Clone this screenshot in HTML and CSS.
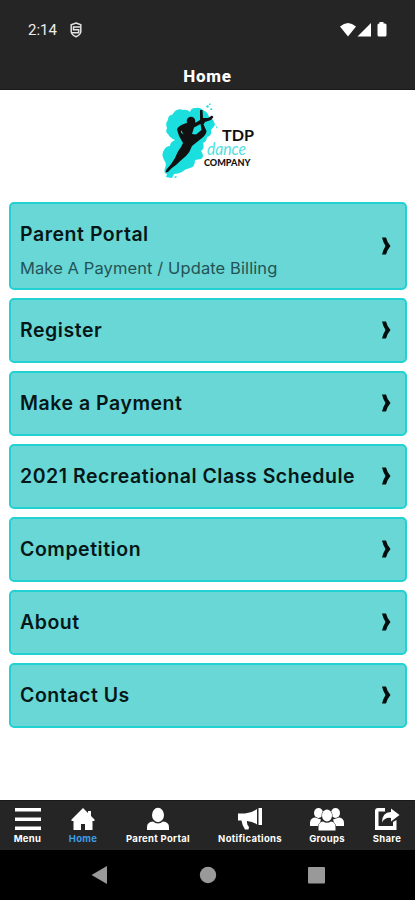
FILE: index.html
```html
<!DOCTYPE html>
<html lang="en">
<head>
    <meta charset="UTF-8">
    <meta name="viewport" content="width=device-width, initial-scale=1.0">
    <title>TDP Dance Company</title>
    <link rel="stylesheet" href="styles.css">
</head>
<body>
    <div class="app">
        <header class="header">
            <div class="status-bar">
                <span class="time">2:14</span>
                <svg class="shield" width="12" height="16" viewBox="0 0 12 16" fill="none" stroke="#e4e4e4" stroke-width="1.5">
                    <path d="M6 1 L10.8 2.8 V10 Q10.3 13 6 14.8 Q1.7 13 1.2 10 V2.8 Z"/>
                    <path d="M10 5 H3.5 V7.7 H8.7 V10.7 H2"/>
                </svg>
                <svg class="signals" width="50" height="18" viewBox="0 0 50 18" fill="#fff">
                    <path d="M0 5.500 Q8 -1.500 16 5.500 L8 15.500 Z"/>
                    <path d="M31 2 V15.500 H17.500 Z"/>
                    <path d="M39.500 2.500 V1 H43.500 V2.500 H45 Q46.500 2.500 46.500 4 V14 Q46.500 15.500 45 15.500 H39 Q37.500 15.500 37.500 14 V4 Q37.500 2.500 39 2.500 Z"/>
                </svg>
            </div>
            <h1 class="title">Home</h1>
        </header>

        <main class="content">
            <div class="logo">
                <svg width="100" height="84" viewBox="0 0 100 84">
                    <!-- paint splash -->
                    <path fill="#1bdede" d="M17 11 Q21 8 25 10 Q29 9 32 12 Q33 8 37 8 Q42 7 45 10 Q50 12 51 17 Q56 19 57 25 L53 30 Q54 36 49 37 Q49 41 45 43 Q47 48 43 51 Q47 56 43 59 L37 60 Q37 67 32 68 Q27 69 24 72 Q20 74 16 74 L14 78 L8 77 L9 74 Q5 73 7 68 Q9 63 6 60 Q3 54 6 50 Q8 46 12 46 Q12 42 17 40 Q12 38 10 34 Q7 32 9 28 Q7 23 10 20 Q10 15 14 15 Z"/>
                    <path fill="#1bdede" d="M48 6 l2 -1 l1 2 l-2 1 Z M52 9 l1.500 -1 l1 2 h-2 Z M51 3.500 h1.500 v1.500 h-1.500 Z M58 26 l1.500 1 l-1 1.500 Z M16 77 l2 -1 l1 1 l-2 1 Z"/>
                    <!-- dancer -->
                    <circle cx="33" cy="21" r="4.300" fill="#111"/>
                    <path fill="#111" d="M42 10 L44.500 10 L45 18 L50 18 L54 15.500 L55.500 17 L53 20 L47 22 L45.500 24.500 L48.500 31 Q48 35 44 38 L34 46 Q32 52 28 56 Q22 61 18 65 Q13 68 10 72 L7.500 72.500 L8.500 69.500 Q13 65 17 58 Q19 52 23 47 L25 43 L21 36 L19 29.500 Q20 26 27 23.500 L33 22 L38 22.500 L42 20 Z"/>
                    <path fill="#1bdede" d="M36 27.500 L42.500 24 L43.500 30 L38 34.500 L34 34 Z M23 30 L25.500 34.500 L23 32.500 Z"/>
                    <text class="logo-script" x="49" y="54.500" textLength="39" lengthAdjust="spacingAndGlyphs">dance</text>
                    <text class="logo-name" x="64" y="41" textLength="32" lengthAdjust="spacingAndGlyphs">TDP</text>
                    <text class="logo-company" x="46" y="66" textLength="46.500" lengthAdjust="spacingAndGlyphs">COMPANY</text>
                </svg>
            </div>

            <nav class="links">
                <a class="card card-tall" href="#">
                    <span class="card-text">
                        <span class="card-title">Parent Portal</span>
                        <span class="card-subtitle">Make A Payment / Update Billing</span>
                    </span>
                    <svg class="chevron" viewBox="0 0 10 18"><path d="M1 0.500 H5 Q6 5 9.500 9 Q6 13 5 17.500 H1 Q2 13 4.500 9 Q2 5 1 0.500 Z"/></svg>
                </a>
                <a class="card" href="#">
                    <span class="card-title">Register</span>
                    <svg class="chevron" viewBox="0 0 10 18"><path d="M1 0.500 H5 Q6 5 9.500 9 Q6 13 5 17.500 H1 Q2 13 4.500 9 Q2 5 1 0.500 Z"/></svg>
                </a>
                <a class="card" href="#">
                    <span class="card-title">Make a Payment</span>
                    <svg class="chevron" viewBox="0 0 10 18"><path d="M1 0.500 H5 Q6 5 9.500 9 Q6 13 5 17.500 H1 Q2 13 4.500 9 Q2 5 1 0.500 Z"/></svg>
                </a>
                <a class="card" href="#">
                    <span class="card-title">2021 Recreational Class Schedule</span>
                    <svg class="chevron" viewBox="0 0 10 18"><path d="M1 0.500 H5 Q6 5 9.500 9 Q6 13 5 17.500 H1 Q2 13 4.500 9 Q2 5 1 0.500 Z"/></svg>
                </a>
                <a class="card" href="#">
                    <span class="card-title">Competition</span>
                    <svg class="chevron" viewBox="0 0 10 18"><path d="M1 0.500 H5 Q6 5 9.500 9 Q6 13 5 17.500 H1 Q2 13 4.500 9 Q2 5 1 0.500 Z"/></svg>
                </a>
                <a class="card" href="#">
                    <span class="card-title">About</span>
                    <svg class="chevron" viewBox="0 0 10 18"><path d="M1 0.500 H5 Q6 5 9.500 9 Q6 13 5 17.500 H1 Q2 13 4.500 9 Q2 5 1 0.500 Z"/></svg>
                </a>
                <a class="card" href="#">
                    <span class="card-title">Contact Us</span>
                    <svg class="chevron" viewBox="0 0 10 18"><path d="M1 0.500 H5 Q6 5 9.500 9 Q6 13 5 17.500 H1 Q2 13 4.500 9 Q2 5 1 0.500 Z"/></svg>
                </a>
            </nav>
        </main>

        <nav class="tab-bar">
            <a class="tab" href="#">
                <svg width="26" height="24" viewBox="0 0 26 24"><path d="M0 1 H26 V4.500 H0 Z M0 10.500 H26 V14 H0 Z M0 19.500 H26 V23 H0 Z"/></svg>
                <span>Menu</span>
            </a>
            <a class="tab active" href="#">
                <svg width="24" height="24" viewBox="0 0 24 24"><path d="M12 1 L17 6 V4 H20 V9 L23.500 12.500 V14 H21.500 V23 H14 V17 H10 V23 H2.500 V14 H0.500 V12.500 Z"/></svg>
                <span>Home</span>
            </a>
            <a class="tab" href="#">
                <svg width="24" height="24" viewBox="0 0 24 24"><ellipse cx="12" cy="8" rx="6" ry="7.200"/><path d="M1 23 V20 Q1 15 7 14.500 Q12 18.500 17 14.500 Q23 15 23 20 V23 Z"/></svg>
                <span>Parent Portal</span>
            </a>
            <a class="tab" href="#">
                <svg width="26" height="24" viewBox="0 0 26 24"><path d="M1 6.500 H8 Q15 6 20 2 V17.500 Q16 14.500 10 14 Q9.500 17 12 20 L11.500 22.500 H8 Q5 18 4.500 13.500 H1 Z M21.500 1 H25 V18 H21.500 Z"/></svg>
                <span>Notifications</span>
            </a>
            <a class="tab" href="#">
                <svg width="36" height="24" viewBox="0 0 36 24">
                    <ellipse cx="9.500" cy="6" rx="4.500" ry="5"/><ellipse cx="26.500" cy="6" rx="4.500" ry="5"/>
                    <path d="M1 19 V16 Q1 11 6 10.500 L12 12.500 L10 19 Z M35 19 V16 Q35 11 30 10.500 L24 12.500 L26 19 Z"/>
                    <g class="group-front"><ellipse cx="18" cy="8.500" rx="5" ry="6"/><path d="M9.500 23.500 V20 Q9.500 15 14 14.500 Q18 17 22 14.500 Q26.500 15 26.500 20 V23.500 Z"/></g>
                </svg>
                <span>Groups</span>
            </a>
            <a class="tab" href="#">
                <svg width="26" height="24" viewBox="0 0 26 24"><path d="M11 1 V4.500 H4.500 V19 H19 V15 L22.500 13 V23 H1 V4 Q1 1 4 1 Z"/><path d="M17 1.500 L25.500 8 L17 14.500 V11 Q11 10 8 15.500 Q8 5 17 5 Z"/></svg>
                <span>Share</span>
            </a>
        </nav>

        <div class="system-nav">
            <svg width="17" height="20" viewBox="0 0 17 20"><path d="M0.500 10 L16 1 V19 Z"/></svg>
            <svg width="18" height="20" viewBox="0 0 18 20"><circle cx="9" cy="10" r="8.200"/></svg>
            <svg width="17" height="20" viewBox="0 0 17 20"><rect x="0" y="2" width="17" height="16.500" rx="1"/></svg>
        </div>
    </div>
</body>
</html>
```
FILE: styles.css
```css
* {
    box-sizing: border-box;
}

body {
    margin: 0;
    background: #fff;
    font-family: Inter, "Open Sans", sans-serif;
}

a {
    text-decoration: none;
}

.app {
    display: flex;
    flex-direction: column;
    height: 900px;
    width: 415px;
    overflow: hidden;
}

.header {
    height: 90px;
    background: #252525;
    border-bottom: 1px solid #1a1a1a;
    color: #fff;
}

.status-bar {
    display: flex;
    align-items: center;
    height: 60px;
    padding: 0 25px 0 28px;
}

.time {
    font: 400 15px/18px Roboto, sans-serif;
    color: #ededed;
    width: 42px;
}

.signals {
    margin-left: auto;
}

.title {
    margin: 5px 0 0;
    font: 800 17px/22px Roboto, sans-serif;
    letter-spacing: 0.7px;
    text-align: center;
}

.content {
    flex: 1;
    padding: 10px 8px 0 9px;
}

.logo {
    height: 84px;
    margin: 0 0 18px 149px;
}

.logo svg {
    display: block;
}

.logo-name {
    font: 700 15px Lato, sans-serif;
    fill: #111;
}

.logo-script {
    font: italic 400 18px Lato, cursive;
    fill: #4fe0e0;
}

.logo-company {
    font: 900 8.5px Lato, sans-serif;
    fill: #111;
}

.links {
    display: flex;
    flex-direction: column;
    gap: 8px;
}

.card {
    display: flex;
    align-items: center;
    justify-content: space-between;
    height: 65px;
    padding: 0 14px 0 9px;
    background: #69d7d5;
    border: 2px solid #22d1d1;
    border-radius: 5px;
    color: #071718;
}

.card-tall {
    height: 88px;
}

.card-text {
    display: flex;
    flex-direction: column;
    gap: 9px;
    padding-top: 8px;
}

.card-title {
    font-size: 19.5px;
    font-weight: 600;
    line-height: 24px;
    padding-bottom: 2px;
    letter-spacing: 0.53px;
}

.card-subtitle {
    font-size: 16.5px;
    line-height: 22px;
    letter-spacing: 0.1px;
    color: #235357;
}

.chevron {
    width: 10px;
    height: 18px;
    margin-bottom: 1px;
    fill: #050d0d;
}

.tab-bar {
    display: grid;
    grid-template-columns: 55px 56px 94px 90px 64px 56px;
    height: 50px;
    padding-top: 6px;
    background: #252525;
    border-top: 1px solid #1a1a1a;
}

.tab {
    display: flex;
    flex-direction: column;
    align-items: center;
    gap: 2px;
    color: #fff;
    font-size: 9.5px;
    font-weight: 700;
    line-height: 12px;
    letter-spacing: 0.3px;
    white-space: nowrap;
}

.tab svg {
    fill: #fff;
}

.tab.active {
    color: #3c9ee5;
}

.group-front {
    stroke: #252525;
    stroke-width: 1;
    paint-order: stroke;
}

.system-nav {
    display: flex;
    align-items: center;
    justify-content: center;
    gap: 91px;
    height: 50px;
    background: #000;
}

.system-nav svg {
    fill: #999;
}
```
